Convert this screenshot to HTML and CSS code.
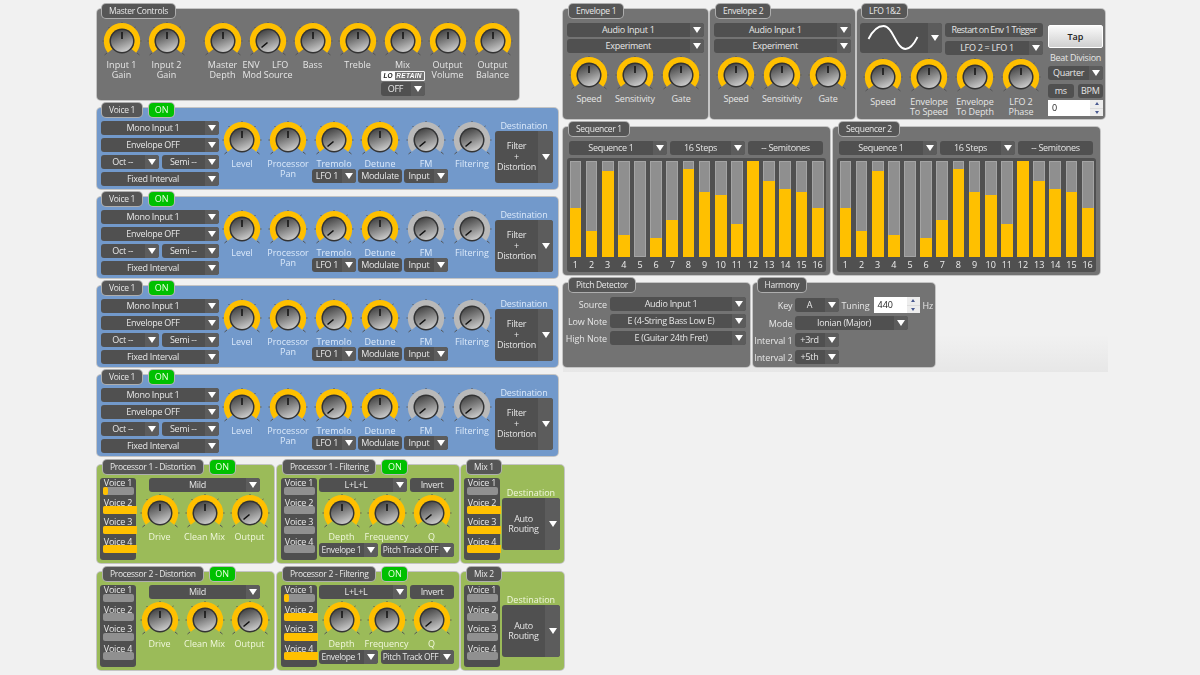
FILE: index.html
```html
<!DOCTYPE html>
<html lang="en">
<head>
<meta charset="utf-8">
<title>Pitch FX Editor</title>
<link rel="stylesheet" href="styles.css">
</head>
<body>
<svg class="defs" aria-hidden="true">
  <defs>
    <linearGradient id="cap" x1="0.3" y1="0" x2="0.7" y2="1">
      <stop offset="0" stop-color="#444"/><stop offset="0.45" stop-color="#808080"/><stop offset="1" stop-color="#d0d0d0"/>
    </linearGradient>
    <g id="base">
      <path d="M20 0v2.500M6.500 5l1.600 1.600M33.500 5l-1.600 1.600M2.500 33l2.500-2M37.500 33l-2.500-2M0.500 19h2M39.500 19h-2" stroke="#555" stroke-width="1" fill="none"/>
      <path d="M8.200 28.800A15.200 15.200 0 1 1 31.800 28.800" fill="none" stroke="currentColor" stroke-width="6"/>
      <circle cx="20" cy="19" r="12.500" fill="#333"/>
      <circle cx="20" cy="19" r="11" fill="url(#cap)"/>
    </g>
    <symbol id="k-up" viewBox="0 0 40 36"><use href="#base"/><path d="M20 10v7" stroke="#111" stroke-width="1.500"/></symbol>
    <symbol id="k-low" viewBox="0 0 40 36"><use href="#base"/><path d="M13.500 25.500l6-5" stroke="#111" stroke-width="1.600"/></symbol>
  </defs>
</svg>
<main class="app">
  <section class="col left">
    <div class="panel grey master">
      <div class="tabs"><span class="tab">Master Controls</span></div>
      <div class="row knobs">
        <div class="cell"><svg class="knob"><use href="#k-up"/></svg><p>Input 1<br>Gain</p></div>
        <div class="cell"><svg class="knob"><use href="#k-up"/></svg><p>Input 2<br>Gain</p></div>
        <div class="cell gap"><svg class="knob"><use href="#k-up"/></svg><p>Master<br>Depth</p></div>
        <div class="cell"><svg class="knob"><use href="#k-low"/></svg><p><span class="split"><span>ENV</span><span>LFO</span></span>Mod Source</p></div>
        <div class="cell"><svg class="knob"><use href="#k-up"/></svg><p>Bass</p></div>
        <div class="cell"><svg class="knob"><use href="#k-up"/></svg><p>Treble</p></div>
        <div class="cell"><svg class="knob"><use href="#k-up"/></svg><p>Mix</p>
          <div class="retain"><b>LO</b><em>RETAIN</em></div>
          <div class="sel mini"><span class="t">OFF</span><i class="ar"></i></div>
        </div>
        <div class="cell"><svg class="knob"><use href="#k-up"/></svg><p>Output<br>Volume</p></div>
        <div class="cell"><svg class="knob"><use href="#k-up"/></svg><p>Output<br>Balance</p></div>
      </div>
    </div>

    <div class="panel blue voice">
      <div class="tabs"><span class="tab">Voice 1</span><span class="tab on">ON</span></div>
      <div class="row body">
        <div class="vsel">
          <div class="sel"><span class="t">Mono Input 1</span><i class="ar"></i></div>
          <div class="sel"><span class="t">Envelope OFF</span><i class="ar"></i></div>
          <div class="pair"><div class="sel"><span class="t">Oct --</span><i class="ar"></i></div><div class="sel"><span class="t">Semi --</span><i class="ar"></i></div></div>
          <div class="sel"><span class="t">Fixed Interval</span><i class="ar"></i></div>
        </div>
        <div class="cell"><svg class="knob"><use href="#k-up"/></svg><p>Level</p></div>
        <div class="cell"><svg class="knob"><use href="#k-up"/></svg><p>Processor<br>Pan</p></div>
        <div class="cell"><svg class="knob"><use href="#k-low"/></svg><p class="one">Tremolo</p><div class="sel sub"><span class="t">LFO 1</span><i class="ar"></i></div></div>
        <div class="cell"><svg class="knob"><use href="#k-up"/></svg><p class="one">Detune</p><div class="sel sub"><span class="t">Modulate</span></div></div>
        <div class="cell silver"><svg class="knob"><use href="#k-low"/></svg><p class="one">FM</p><div class="sel sub"><span class="t">Input</span><i class="ar"></i></div></div>
        <div class="cell silver"><svg class="knob"><use href="#k-low"/></svg><p>Filtering</p></div>
        <div class="dest"><p>Destination</p><div class="sel big"><span class="t">Filter<br>+<br>Distortion</span><i class="ar"></i></div></div>
      </div>
    </div>

    <div class="panel blue voice">
      <div class="tabs"><span class="tab">Voice 1</span><span class="tab on">ON</span></div>
      <div class="row body">
        <div class="vsel">
          <div class="sel"><span class="t">Mono Input 1</span><i class="ar"></i></div>
          <div class="sel"><span class="t">Envelope OFF</span><i class="ar"></i></div>
          <div class="pair"><div class="sel"><span class="t">Oct --</span><i class="ar"></i></div><div class="sel"><span class="t">Semi --</span><i class="ar"></i></div></div>
          <div class="sel"><span class="t">Fixed Interval</span><i class="ar"></i></div>
        </div>
        <div class="cell"><svg class="knob"><use href="#k-up"/></svg><p>Level</p></div>
        <div class="cell"><svg class="knob"><use href="#k-up"/></svg><p>Processor<br>Pan</p></div>
        <div class="cell"><svg class="knob"><use href="#k-low"/></svg><p class="one">Tremolo</p><div class="sel sub"><span class="t">LFO 1</span><i class="ar"></i></div></div>
        <div class="cell"><svg class="knob"><use href="#k-up"/></svg><p class="one">Detune</p><div class="sel sub"><span class="t">Modulate</span></div></div>
        <div class="cell silver"><svg class="knob"><use href="#k-low"/></svg><p class="one">FM</p><div class="sel sub"><span class="t">Input</span><i class="ar"></i></div></div>
        <div class="cell silver"><svg class="knob"><use href="#k-low"/></svg><p>Filtering</p></div>
        <div class="dest"><p>Destination</p><div class="sel big"><span class="t">Filter<br>+<br>Distortion</span><i class="ar"></i></div></div>
      </div>
    </div>

    <div class="panel blue voice">
      <div class="tabs"><span class="tab">Voice 1</span><span class="tab on">ON</span></div>
      <div class="row body">
        <div class="vsel">
          <div class="sel"><span class="t">Mono Input 1</span><i class="ar"></i></div>
          <div class="sel"><span class="t">Envelope OFF</span><i class="ar"></i></div>
          <div class="pair"><div class="sel"><span class="t">Oct --</span><i class="ar"></i></div><div class="sel"><span class="t">Semi --</span><i class="ar"></i></div></div>
          <div class="sel"><span class="t">Fixed Interval</span><i class="ar"></i></div>
        </div>
        <div class="cell"><svg class="knob"><use href="#k-up"/></svg><p>Level</p></div>
        <div class="cell"><svg class="knob"><use href="#k-up"/></svg><p>Processor<br>Pan</p></div>
        <div class="cell"><svg class="knob"><use href="#k-low"/></svg><p class="one">Tremolo</p><div class="sel sub"><span class="t">LFO 1</span><i class="ar"></i></div></div>
        <div class="cell"><svg class="knob"><use href="#k-up"/></svg><p class="one">Detune</p><div class="sel sub"><span class="t">Modulate</span></div></div>
        <div class="cell silver"><svg class="knob"><use href="#k-low"/></svg><p class="one">FM</p><div class="sel sub"><span class="t">Input</span><i class="ar"></i></div></div>
        <div class="cell silver"><svg class="knob"><use href="#k-low"/></svg><p>Filtering</p></div>
        <div class="dest"><p>Destination</p><div class="sel big"><span class="t">Filter<br>+<br>Distortion</span><i class="ar"></i></div></div>
      </div>
    </div>

    <div class="panel blue voice">
      <div class="tabs"><span class="tab">Voice 1</span><span class="tab on">ON</span></div>
      <div class="row body">
        <div class="vsel">
          <div class="sel"><span class="t">Mono Input 1</span><i class="ar"></i></div>
          <div class="sel"><span class="t">Envelope OFF</span><i class="ar"></i></div>
          <div class="pair"><div class="sel"><span class="t">Oct --</span><i class="ar"></i></div><div class="sel"><span class="t">Semi --</span><i class="ar"></i></div></div>
          <div class="sel"><span class="t">Fixed Interval</span><i class="ar"></i></div>
        </div>
        <div class="cell"><svg class="knob"><use href="#k-up"/></svg><p>Level</p></div>
        <div class="cell"><svg class="knob"><use href="#k-up"/></svg><p>Processor<br>Pan</p></div>
        <div class="cell"><svg class="knob"><use href="#k-low"/></svg><p class="one">Tremolo</p><div class="sel sub"><span class="t">LFO 1</span><i class="ar"></i></div></div>
        <div class="cell"><svg class="knob"><use href="#k-up"/></svg><p class="one">Detune</p><div class="sel sub"><span class="t">Modulate</span></div></div>
        <div class="cell silver"><svg class="knob"><use href="#k-low"/></svg><p class="one">FM</p><div class="sel sub"><span class="t">Input</span><i class="ar"></i></div></div>
        <div class="cell silver"><svg class="knob"><use href="#k-low"/></svg><p>Filtering</p></div>
        <div class="dest"><p>Destination</p><div class="sel big"><span class="t">Filter<br>+<br>Distortion</span><i class="ar"></i></div></div>
      </div>
    </div>

    <div class="procrow first">
      <div class="panel green dist">
        <div class="tabs"><span class="tab">Processor 1 - Distortion</span><span class="tab on">ON</span></div>
        <div class="row body">
          <div class="vlist">
            <div class="v"><span>Voice 1</span><div class="vbar"><i class="tiny"></i></div></div>
            <div class="v"><span>Voice 2</span><div class="vbar"><i></i></div></div>
            <div class="v"><span>Voice 3</span><div class="vbar"><i></i></div></div>
            <div class="v"><span>Voice 4</span><div class="vbar"><i></i></div></div>
          </div>
          <div class="pmain">
            <div class="sel mild"><span class="t">Mild</span><i class="ar"></i></div>
            <div class="row">
              <div class="cell"><svg class="knob"><use href="#k-up"/></svg><p>Drive</p></div>
              <div class="cell"><svg class="knob"><use href="#k-up"/></svg><p>Clean Mix</p></div>
              <div class="cell"><svg class="knob"><use href="#k-low"/></svg><p>Output</p></div>
            </div>
          </div>
        </div>
      </div>
      <div class="panel green filt">
        <div class="tabs"><span class="tab">Processor 1 - Filtering</span><span class="tab on">ON</span></div>
        <div class="row body">
          <div class="vlist">
            <div class="v"><span>Voice 1</span><div class="vbar"></div></div>
            <div class="v"><span>Voice 2</span><div class="vbar"></div></div>
            <div class="v"><span>Voice 3</span><div class="vbar"></div></div>
            <div class="v"><span>Voice 4</span><div class="vbar"></div></div>
          </div>
          <div class="fmain">
            <div class="pair"><div class="sel lll"><span class="t">L+L+L</span><i class="ar"></i></div><div class="sel inv"><span class="t">Invert</span></div></div>
            <div class="row">
              <div class="cell"><svg class="knob"><use href="#k-up"/></svg><p>Depth</p></div>
              <div class="cell"><svg class="knob"><use href="#k-up"/></svg><p>Frequency</p></div>
              <div class="cell"><svg class="knob"><use href="#k-low"/></svg><p>Q</p></div>
            </div>
            <div class="pair bottom"><div class="sel env"><span class="t">Envelope 1</span><i class="ar"></i></div><div class="sel track"><span class="t">Pitch Track OFF</span><i class="ar"></i></div></div>
          </div>
        </div>
      </div>
      <div class="panel green mix">
        <div class="tabs"><span class="tab">Mix 1</span></div>
        <div class="row body">
          <div class="vlist">
            <div class="v"><span>Voice 1</span><div class="vbar"></div></div>
            <div class="v"><span>Voice 2</span><div class="vbar"><i></i></div></div>
            <div class="v"><span>Voice 3</span><div class="vbar"><i></i></div></div>
            <div class="v"><span>Voice 4</span><div class="vbar"><i></i></div></div>
          </div>
          <div class="mdest"><p>Destination</p><div class="sel big"><span class="t">Auto<br>Routing</span><i class="ar"></i></div></div>
        </div>
      </div>
    </div>

    <div class="procrow">
      <div class="panel green dist">
        <div class="tabs"><span class="tab">Processor 2 - Distortion</span><span class="tab on">ON</span></div>
        <div class="row body">
          <div class="vlist">
            <div class="v"><span>Voice 1</span><div class="vbar"></div></div>
            <div class="v"><span>Voice 2</span><div class="vbar"></div></div>
            <div class="v"><span>Voice 3</span><div class="vbar"></div></div>
            <div class="v"><span>Voice 4</span><div class="vbar"></div></div>
          </div>
          <div class="pmain">
            <div class="sel mild"><span class="t">Mild</span><i class="ar"></i></div>
            <div class="row">
              <div class="cell"><svg class="knob"><use href="#k-up"/></svg><p>Drive</p></div>
              <div class="cell"><svg class="knob"><use href="#k-up"/></svg><p>Clean Mix</p></div>
              <div class="cell"><svg class="knob"><use href="#k-low"/></svg><p>Output</p></div>
            </div>
          </div>
        </div>
      </div>
      <div class="panel green filt">
        <div class="tabs"><span class="tab">Processor 2 - Filtering</span><span class="tab on">ON</span></div>
        <div class="row body">
          <div class="vlist">
            <div class="v"><span>Voice 1</span><div class="vbar"><i class="tiny"></i></div></div>
            <div class="v"><span>Voice 2</span><div class="vbar"><i></i></div></div>
            <div class="v"><span>Voice 3</span><div class="vbar"><i></i></div></div>
            <div class="v"><span>Voice 4</span><div class="vbar"><i></i></div></div>
          </div>
          <div class="fmain">
            <div class="pair"><div class="sel lll"><span class="t">L+L+L</span><i class="ar"></i></div><div class="sel inv"><span class="t">Invert</span></div></div>
            <div class="row">
              <div class="cell"><svg class="knob"><use href="#k-up"/></svg><p>Depth</p></div>
              <div class="cell"><svg class="knob"><use href="#k-up"/></svg><p>Frequency</p></div>
              <div class="cell"><svg class="knob"><use href="#k-low"/></svg><p>Q</p></div>
            </div>
            <div class="pair bottom"><div class="sel env"><span class="t">Envelope 1</span><i class="ar"></i></div><div class="sel track"><span class="t">Pitch Track OFF</span><i class="ar"></i></div></div>
          </div>
        </div>
      </div>
      <div class="panel green mix">
        <div class="tabs"><span class="tab">Mix 2</span></div>
        <div class="row body">
          <div class="vlist">
            <div class="v"><span>Voice 1</span><div class="vbar"></div></div>
            <div class="v"><span>Voice 2</span><div class="vbar"></div></div>
            <div class="v"><span>Voice 3</span><div class="vbar"></div></div>
            <div class="v"><span>Voice 4</span><div class="vbar"></div></div>
          </div>
          <div class="mdest"><p>Destination</p><div class="sel big"><span class="t">Auto<br>Routing</span><i class="ar"></i></div></div>
        </div>
      </div>
    </div>
  </section>

  <section class="col right">
    <div class="toprow">
      <div class="panel grey envp">
        <div class="tabs"><span class="tab">Envelope 1</span></div>
        <div class="stack">
          <div class="sel"><span class="t">Audio Input 1</span><i class="ar"></i></div>
          <div class="sel"><span class="t">Experiment</span><i class="ar"></i></div>
        </div>
        <div class="row envk">
          <div class="cell"><svg class="knob"><use href="#k-up"/></svg><p>Speed</p></div>
          <div class="cell"><svg class="knob"><use href="#k-up"/></svg><p>Sensitivity</p></div>
          <div class="cell"><svg class="knob"><use href="#k-up"/></svg><p>Gate</p></div>
        </div>
      </div>
      <div class="panel grey envp">
        <div class="tabs"><span class="tab">Envelope 2</span></div>
        <div class="stack">
          <div class="sel"><span class="t">Audio Input 1</span><i class="ar"></i></div>
          <div class="sel"><span class="t">Experiment</span><i class="ar"></i></div>
        </div>
        <div class="row envk">
          <div class="cell"><svg class="knob"><use href="#k-up"/></svg><p>Speed</p></div>
          <div class="cell"><svg class="knob"><use href="#k-up"/></svg><p>Sensitivity</p></div>
          <div class="cell"><svg class="knob"><use href="#k-up"/></svg><p>Gate</p></div>
        </div>
      </div>
      <div class="panel grey lfo">
        <div class="tabs"><span class="tab">LFO 1&amp;2</span></div>
        <div class="row lfobody">
          <div class="lfomain">
            <div class="row lfotop">
              <div class="sel wave">
                <span class="t"><svg class="sine" viewBox="0 0 68 29"><path d="M8.500 16C12 9 17 3 23.500 3 33 3 36 26 45.500 26 50 26 54 21 57.500 14" fill="none" stroke="#fff" stroke-width="1.800"/></svg></span><i class="ar"></i>
              </div>
              <div class="lfobtns">
                <div class="sel"><span class="t tight">Restart on Env 1 Trigger</span></div>
                <div class="sel"><span class="t">LFO 2 = LFO 1</span><i class="ar"></i></div>
              </div>
            </div>
            <div class="row lfok">
              <div class="cell"><svg class="knob"><use href="#k-up"/></svg><p>Speed</p></div>
              <div class="cell"><svg class="knob"><use href="#k-up"/></svg><p>Envelope<br>To Speed</p></div>
              <div class="cell"><svg class="knob"><use href="#k-up"/></svg><p>Envelope<br>To Depth</p></div>
              <div class="cell"><svg class="knob"><use href="#k-up"/></svg><p>LFO 2<br>Phase</p></div>
            </div>
          </div>
          <div class="lfoside">
            <div class="tap">Tap</div>
            <p>Beat Division</p>
            <div class="sel"><span class="t">Quarter</span><i class="ar"></i></div>
            <div class="pair unit"><div class="sel"><span class="t">ms</span></div><div class="sel"><span class="t">BPM</span></div></div>
            <div class="num"><span class="val">0</span><span class="spin"><i class="sup"></i><i class="sdn"></i></span></div>
          </div>
        </div>
      </div>
    </div>

    <div class="seqrow">
      <div class="panel grey seq">
        <div class="tabs"><span class="tab">Sequencer 1</span></div>
        <div class="row seqtop">
          <div class="sel s1"><span class="t">Sequence 1</span><i class="ar"></i></div>
          <div class="sel s2"><span class="t">16 Steps</span><i class="ar"></i></div>
          <div class="sel s3"><span class="t">-- Semitones</span></div>
        </div>
        <div class="steps">
          <div class="step"><div class="bar"><i style="height:51%"></i></div><span>1</span></div>
          <div class="step"><div class="bar"><i style="height:27%"></i></div><span>2</span></div>
          <div class="step"><div class="bar"><i style="height:90%"></i></div><span>3</span></div>
          <div class="step"><div class="bar"><i style="height:23%"></i></div><span>4</span></div>
          <div class="step"><div class="bar"><i style="height:0%"></i></div><span>5</span></div>
          <div class="step"><div class="bar"><i style="height:20%"></i></div><span>6</span></div>
          <div class="step"><div class="bar"><i style="height:39%"></i></div><span>7</span></div>
          <div class="step"><div class="bar"><i style="height:92%"></i></div><span>8</span></div>
          <div class="step"><div class="bar"><i style="height:68%"></i></div><span>9</span></div>
          <div class="step"><div class="bar"><i style="height:65%"></i></div><span>10</span></div>
          <div class="step"><div class="bar"><i style="height:34%"></i></div><span>11</span></div>
          <div class="step"><div class="bar"><i style="height:100%"></i></div><span>12</span></div>
          <div class="step"><div class="bar"><i style="height:79%"></i></div><span>13</span></div>
          <div class="step"><div class="bar"><i style="height:71%"></i></div><span>14</span></div>
          <div class="step"><div class="bar"><i style="height:68%"></i></div><span>15</span></div>
          <div class="step"><div class="bar"><i style="height:51%"></i></div><span>16</span></div>
        </div>
      </div>
      <div class="panel grey seq">
        <div class="tabs"><span class="tab">Sequencer 2</span></div>
        <div class="row seqtop">
          <div class="sel s1"><span class="t">Sequence 1</span><i class="ar"></i></div>
          <div class="sel s2"><span class="t">16 Steps</span><i class="ar"></i></div>
          <div class="sel s3"><span class="t">-- Semitones</span></div>
        </div>
        <div class="steps">
          <div class="step"><div class="bar"><i style="height:51%"></i></div><span>1</span></div>
          <div class="step"><div class="bar"><i style="height:27%"></i></div><span>2</span></div>
          <div class="step"><div class="bar"><i style="height:90%"></i></div><span>3</span></div>
          <div class="step"><div class="bar"><i style="height:23%"></i></div><span>4</span></div>
          <div class="step"><div class="bar"><i style="height:0%"></i></div><span>5</span></div>
          <div class="step"><div class="bar"><i style="height:20%"></i></div><span>6</span></div>
          <div class="step"><div class="bar"><i style="height:39%"></i></div><span>7</span></div>
          <div class="step"><div class="bar"><i style="height:92%"></i></div><span>8</span></div>
          <div class="step"><div class="bar"><i style="height:68%"></i></div><span>9</span></div>
          <div class="step"><div class="bar"><i style="height:65%"></i></div><span>10</span></div>
          <div class="step"><div class="bar"><i style="height:34%"></i></div><span>11</span></div>
          <div class="step"><div class="bar"><i style="height:100%"></i></div><span>12</span></div>
          <div class="step"><div class="bar"><i style="height:79%"></i></div><span>13</span></div>
          <div class="step"><div class="bar"><i style="height:71%"></i></div><span>14</span></div>
          <div class="step"><div class="bar"><i style="height:68%"></i></div><span>15</span></div>
          <div class="step"><div class="bar"><i style="height:51%"></i></div><span>16</span></div>
        </div>
      </div>
    </div>

    <div class="btmrow">
      <div class="panel grey pitch">
        <div class="tabs"><span class="tab">Pitch Detector</span></div>
        <div class="form pform">
          <label>Source</label><div class="sel"><span class="t">Audio Input 1</span><i class="ar"></i></div>
          <label>Low Note</label><div class="sel"><span class="t">E (4-String Bass Low E)</span><i class="ar"></i></div>
          <label>High Note</label><div class="sel"><span class="t">E (Guitar 24th Fret)</span><i class="ar"></i></div>
        </div>
      </div>
      <div class="panel grey harm">
        <div class="tabs"><span class="tab">Harmony</span></div>
        <div class="form hform">
          <label>Key</label>
          <div class="row keyrow">
            <div class="sel small"><span class="t">A</span><i class="ar"></i></div>
            <label>Tuning</label>
            <div class="num tune"><span class="val">440</span><span class="spin"><i class="sup"></i><i class="sdn"></i></span></div>
            <label>Hz</label>
          </div>
          <label>Mode</label><div class="sel mode"><span class="t">Ionian (Major)</span><i class="ar"></i></div>
          <label>Interval 1</label><div class="sel small"><span class="t">+3rd</span><i class="ar"></i></div>
          <label>Interval 2</label><div class="sel small"><span class="t">+5th</span><i class="ar"></i></div>
        </div>
      </div>
    </div>
  </section>
</main>
</body>
</html>
```

FILE: styles.css
```css
* { box-sizing: border-box; }
html, body { margin: 0; height: 100%; }
body {
  background: #f1f1f1;
  overflow: hidden;
  font: 9px/10px "Open Sans", "Liberation Sans", sans-serif;
  color: #e6e6e6;
}
.defs { position: absolute; width: 0; height: 0; }
p { margin: 0; }
.app { display: flex; align-items: flex-start; padding-left: 97px; height: 675px; filter: blur(0.3px); }
.col { display: flex; flex-direction: column; }
.left { width: 466px; padding-top: 9px; gap: 8px; }
.right {
  width: 545px; height: 372px; padding-top: 9px; gap: 8px;
  background: linear-gradient(#f1f1f1 90%, #e7e7e7);
}
.row { display: flex; }

.panel {
  border-radius: 4px;
  box-shadow: 0 0 0 1px #c4c4c4;
  flex: none;
}
.grey { background: #737373; }
.blue { background: #7299cb; color: #dbe9fa; }
.green { background: #9bbb59; color: #f0f7dc; }
.tabs { display: flex; gap: 7px; height: 14px; margin: -5px 0 0 5px; }
.tab {
  height: 14px; padding: 0 7px; line-height: 13px;
  font-size: 8.500px; letter-spacing: -0.3px;
  background: #565656; color: #e8e8e8; border-radius: 4px;
  box-shadow: 0 0 0 1px #aeaeae;
  white-space: nowrap;
}
.tab.on { background: #00c000; color: #e9ffe0; width: 25px; padding: 0; text-align: center; box-shadow: 0 0 0 1px #b7b7b7; letter-spacing: 0; font-size: 9px; }

.sel {
  display: flex; height: 14px; background: #505050; border-radius: 3px;
  color: #e6e6e6; overflow: hidden; flex: none;
}
.sel .t { flex: 1; text-align: center; line-height: 13px; white-space: nowrap; letter-spacing: -0.3px; }
.sel .t.tight { letter-spacing: -0.62px; }
.ar { width: 14px; flex: none; background: #5c5c5c; display: flex; align-items: center; justify-content: center; }
.ar::after {
  content: ""; border: 4px solid transparent; border-top: 6px solid #fff; border-bottom: 0;
}

.cell { width: 45px; flex: none; text-align: center; display: flex; flex-direction: column; align-items: center; color: #ffc000; }
.cell p { color: #e6e6e6; margin-top: 2px; white-space: nowrap; }
.blue .cell p { color: #dbe9fa; }
.green .cell p { color: #f0f7dc; }
.cell.silver { color: #b9b9b9; }
.knob { width: 40px; height: 36px; display: block; flex: none; overflow: visible; }

/* Master */
.master { width: 422px; height: 91px; }
.master .knobs { margin-top: 4px; padding-left: 2px; }
.cell.gap { margin-left: 11px; }
.split { display: flex; justify-content: space-between; width: 46px; }
.retain {
  display: flex; height: 10px; margin-top: 1px; width: 44px;
  border: 1px solid #f2f2f2; border-radius: 1px;
  font: italic 700 6.500px/8px "Liberation Sans", sans-serif; color: #fff;
}
.retain b { background: #fff; color: #222; padding: 0 2px; font-style: italic; }
.retain em { flex: 1; text-align: center; letter-spacing: 0.3px; }
.sel.mini { width: 44px; margin-top: 1px; }

/* Voices */
.voice { width: 461px; height: 81px; }
.voice .body { margin-top: 4px; padding-left: 4px; }
.vsel { width: 118px; display: flex; flex-direction: column; gap: 3px; flex: none; }
.pair { display: flex; gap: 3px; }
.pair .sel { flex: 1; }
.voice .cell { width: 46px; }
.cell p.one { margin-bottom: 0; }
.sel.sub { width: 44px; }
.dest { width: 58px; flex: none; text-align: center; }
.dest p { line-height: 10px; white-space: nowrap; letter-spacing: -0.1px; }
.sel.big { height: 52px; align-items: stretch; }
.sel.big .t { align-self: center; line-height: 10.500px; }
.sel.big .ar { width: 15px; }

/* Processors */
.procrow { display: flex; margin-bottom: 1px; gap: 3px; }
.procrow.first { margin-top: 1px; }
.dist { width: 177px; height: 98px; }
.filt { width: 182px; height: 98px; margin-right: -1px; }
.mix { width: 103px; height: 98px; }
.procrow .tabs { margin-left: 6px; }
.green .body { margin-top: 4px; padding-left: 3px; }
.filt .body { padding-left: 4px; }
.vlist {
  width: 36px; height: 82px; background: #4f4f4f; border-radius: 3px; flex: none;
  display: flex; flex-direction: column;
}
.v { height: 19.500px; color: #e8e8e8; text-align: center; }
.v span { display: block; line-height: 10px; letter-spacing: -0.2px; }
.vbar { height: 8px; width: 31px; margin: -1.500px 0 0 3px; background: #909090; border-radius: 2px; }
.vbar i { display: block; height: 8px; width: 34px; background: #ffc000; border-radius: 2px 0 0 2px; }
.vbar i.tiny { width: 5px; border-radius: 2px; }
.pmain { width: 136px; margin-left: 1px; flex: none; }
.sel.mild { width: 111px; margin: 0 0 2px 12px; }
.fmain { width: 135px; margin-left: 2px; flex: none; }
.lll { flex: none !important; width: 88px; }
.inv { flex: none !important; width: 44px; }
.fmain .pair + .row { margin-top: 2px; }
.bottom { margin-top: 1px; }
.env { flex: none !important; width: 59px; }
.track { flex: none !important; width: 73px; }
.env .t, .track .t { font-size: 8.500px; letter-spacing: -0.35px; }
.mdest { width: 58px; margin-left: 2px; text-align: center; flex: none; padding-top: 9px; }
.mdest p { line-height: 11px; }

/* Envelopes */
.toprow { display: flex; gap: 2.500px; height: 110px; }
.envp { width: 144.500px; height: 110px; }
.envp .tabs { margin-left: 6px; }
.stack { display: flex; flex-direction: column; gap: 2px; margin: 5px 4px 0; }
.envk { margin: 3px 0 0 3px; }
.envk .cell { width: 46px; }
.envk .cell p { letter-spacing: -0.2px; }

/* LFO */
.lfo { width: 247.500px; height: 110px; }
.lfobody { margin-top: 5px; padding-left: 3px; }
.lfomain { width: 185px; flex: none; }
.lfotop { gap: 3px; }
.wave { width: 82px; height: 30px; }
.wave .t { display: block; }
.sine { width: 68px; height: 29px; display: block; }
.lfobtns { display: flex; flex-direction: column; gap: 3.500px; width: 98px; }
.lfok { margin-top: 3px; }
.lfok .cell { width: 46px; }
.lfok .cell p { margin-top: 3px; letter-spacing: -0.1px; }
.lfoside { width: 55px; margin-left: 3px; padding-top: 2px; flex: none; text-align: center; }
.tap {
  height: 23px; line-height: 21px; border-radius: 2px; color: #222; font-weight: 600;
  border: 1px solid #fff;
  background: linear-gradient(#fafafa, #cfcfcf);
}
.lfoside p { margin: 5px 0 3px; white-space: nowrap; letter-spacing: -0.25px; }
.unit { gap: 4px; margin-top: 4px; }
.num {
  display: flex; height: 16px; margin-top: 2px; background: #fff; color: #222;
  text-align: left; line-height: 15px;
}
.num .val { flex: 1; padding-left: 4px; }
.spin { width: 13px; background: #dcdcdc; display: flex; flex-direction: column; gap: 1px; flex: none; }
.spin i { flex: 1; background: #ededed; display: flex; align-items: center; justify-content: center; }
.spin i::after { content: ""; border: 2px solid transparent; }
.spin .sup::after { border-bottom: 3px solid #4a5a90; border-top: 0; }
.spin .sdn::after { border-top: 3px solid #4a5a90; border-bottom: 0; }

/* Sequencers */
.seqrow { display: flex; gap: 3px; height: 148px; }
.seq { width: 267px; height: 148px; }
.seq .tabs { margin-left: 6px; }
.seqtop { margin: 5px 0 0 6px; gap: 3px; }
.s1 { width: 98px; }
.s2 { width: 75px; }
.s3 { width: 75px; }
.steps {
  display: grid; grid-template-columns: repeat(16, 1fr); column-gap: 4.350px;
  width: 259px; height: 114px; margin: 3px 0 0 4px; padding: 3px 2.500px 0;
  background: #505050; border-radius: 3px;
}
.step { text-align: center; }
.bar { height: 96px; background: #8f8f8f; display: flex; align-items: flex-end; box-shadow: inset 0 0 0 1px #a4a4a4; }
.bar i { display: block; width: 100%; background: #ffc000; }
.step span { display: block; margin: 2px -3px 0; line-height: 11px; color: #eee; }

/* Pitch and harmony */
.btmrow { display: flex; gap: 2.500px; height: 84px; }
.pitch { width: 187px; height: 84px; }
.harm { width: 182px; height: 84px; }
.pitch .tabs { margin-left: 6px; }
.form { display: grid; align-items: center; margin-top: 5px; }
.form label { text-align: right; white-space: nowrap; line-height: 11px; letter-spacing: -0.1px; }
.pform { grid-template-columns: 44px 136px; column-gap: 3px; row-gap: 3px; }
.hform { grid-template-columns: 40px auto; column-gap: 2px; row-gap: 3px; justify-items: start; }
.hform > label { justify-self: end; }
.keyrow { align-items: center; gap: 3px; }
.small { width: 44px; }
.mode { width: 113px; }
.num.tune { width: 46px; height: 16px; margin: 0 0 0 1px; }
.tune .val { padding-left: 4px; line-height: 15px; }
```
